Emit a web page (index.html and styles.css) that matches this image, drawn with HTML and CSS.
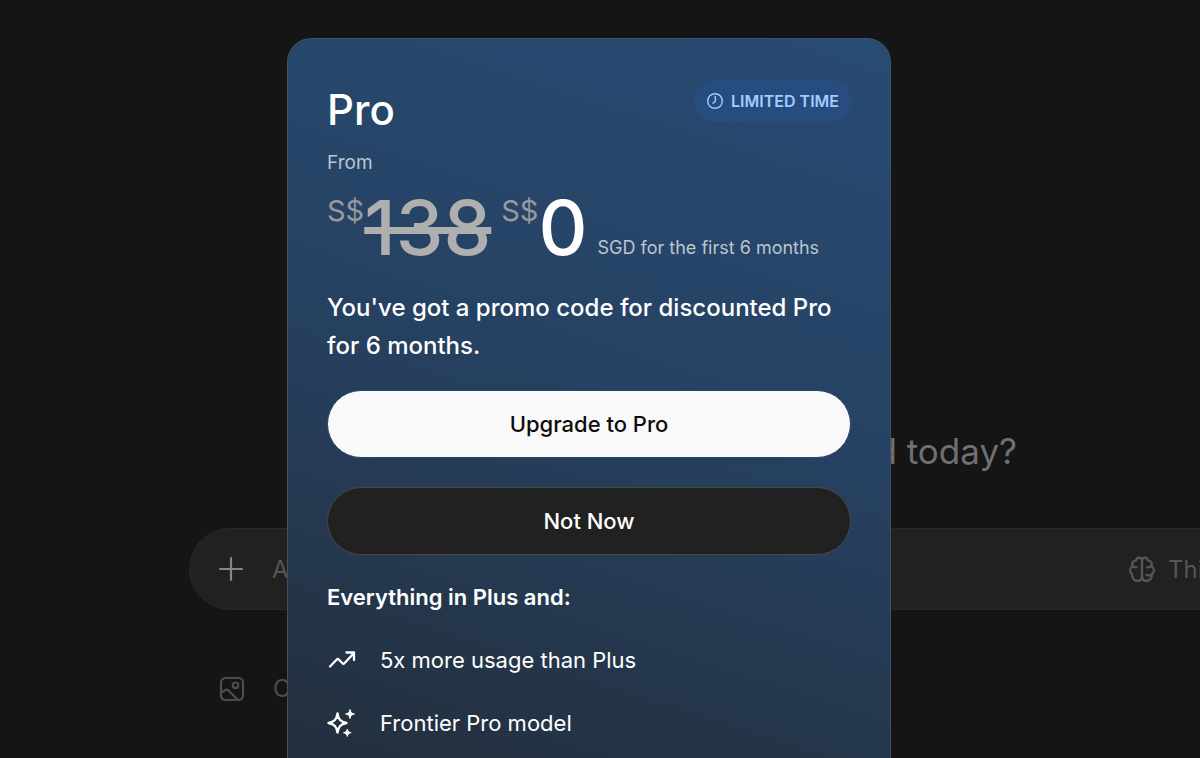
FILE: index.html
```html
<!DOCTYPE html>
<html lang="en">
<head>
<meta charset="utf-8">
<meta name="viewport" content="width=device-width, initial-scale=1">
<title>Upgrade to Pro</title>
<link rel="stylesheet" href="styles.css">
</head>
<body>
<main class="chat">
  <h1 class="greeting">What's on your mind today?</h1>
  <form class="composer">
    <button class="icon-button" type="button" aria-label="Add">
      <svg width="26" height="26" viewBox="0 0 26 26" fill="none" stroke="currentColor" stroke-width="2.200" stroke-linecap="round"><path d="M13 2v22M2 13h22"/></svg>
    </button>
    <input class="prompt" type="text" aria-label="Message" placeholder="Ask anything">
    <button class="thinking" type="button">
      <svg width="28" height="28" viewBox="0 0 28 28" fill="none" stroke="currentColor" stroke-width="2.400" stroke-linecap="round" stroke-linejoin="round"><path d="M14 4.800C13 1.800 8.400 2 8.200 5.400 4.800 5.600 3.400 8.600 4.600 11 1.300 13 1.400 17.500 4.200 19.200 4 23 6 26 9.500 26c3 0 4.500-2 4.500-5V4.800C15 1.800 19.600 2 19.800 5.400 23.200 5.600 24.600 8.600 23.400 11c3.300 2 3.200 6.500.4 8.200C24 23 22 26 18.500 26c-3 0-4.500-2-4.500-5"/><path d="M4.600 11c.8 1.200 2 1.500 3.800 1.200M19.300 12.200c1.800 0 3.300-.2 4.100-1.200M18.500 19.800c1.600.9 3.500.6 5.300-.6"/></svg>
      <span>Thinking</span>
    </button>
  </form>
  <a class="suggestion" href="#">
    <svg width="26" height="26" viewBox="0 0 26 26" fill="none" stroke="currentColor" stroke-width="2.200" stroke-linecap="round" stroke-linejoin="round"><rect x="2" y="2" width="22" height="22" rx="4.500"/><circle cx="16.500" cy="9.300" r="2.800"/><path d="M2.500 16.500 6.300 14c1.100-.7 2.100-.5 3 .4L18.500 23.500"/></svg>
    <span>Create an image</span>
  </a>
</main>

<div class="overlay">
  <section class="card" role="dialog" aria-labelledby="plan-name">
    <header class="card-header">
      <h2 class="plan-name" id="plan-name">Pro</h2>
      <span class="badge">
        <svg width="18" height="18" viewBox="0 0 18 18" fill="none" stroke="currentColor" stroke-width="1.400" stroke-linecap="round" stroke-linejoin="round"><circle cx="9" cy="9" r="7.300"/><path d="M9.300 4.500v4.700L7 11.300"/></svg>
        LIMITED TIME
      </span>
    </header>
    <p class="from">From</p>
    <div class="pricing">
      <span class="currency">S$</span><s class="old-price">138</s>
      <span class="currency currency-new">S$</span><span class="new-price">0</span>
      <span class="term">SGD for the first 6 months</span>
    </div>
    <p class="promo">You've got a promo code for discounted Pro for 6 months.</p>
    <button class="button button-primary" type="button">Upgrade to Pro</button>
    <button class="button button-secondary" type="button">Not Now</button>
    <h3 class="features-title">Everything in Plus and:</h3>
    <ul class="features">
      <li class="feature">
        <svg width="30" height="30" viewBox="0 0 30 30" fill="none" stroke="currentColor" stroke-width="2.300" stroke-linecap="round" stroke-linejoin="round"><path d="M3 21.500 10 14.300a1 1 0 0 1 1.500 0l4.200 4.200a1 1 0 0 0 1.500 0L26.500 8.500M19.500 7.500h7.500v7.500"/></svg>
        <span>5x more usage than Plus</span>
      </li>
      <li class="feature">
        <svg width="30" height="30" viewBox="0 0 30 30" fill="none" stroke="currentColor" stroke-width="2.300" stroke-linejoin="round"><path d="M10.500 5.500c.9 6 3 8.300 9 9.500-6 1.200-8.100 3.500-9 9.500-.9-6-3-8.300-9-9.500 6-1.200 8.100-3.500 9-9.500Z"/><path fill="currentColor" stroke-width="1" d="M23 1.600c.6 2.800 1.500 3.700 4.400 4.400-2.900.7-3.800 1.600-4.400 4.400-.6-2.800-1.500-3.700-4.400-4.400 2.900-.7 3.800-1.600 4.400-4.400ZM20.300 21c.5 2.400 1.300 3.200 3.800 3.700-2.500.6-3.300 1.400-3.800 3.700-.5-2.300-1.300-3.100-3.800-3.700 2.500-.5 3.300-1.300 3.800-3.700Z"/></svg>
        <span>Frontier Pro model</span>
      </li>
    </ul>
  </section>
</div>
</body>
</html>
```
FILE: styles.css
```css
* {
  box-sizing: border-box;
}

body {
  margin: 0;
  height: 100vh;
  position: relative;
  overflow: hidden;
  background: #151515;
  color: #fff;
  font-family: Inter, "Liberation Sans", sans-serif;
}

h1, h2, h3, p, ul {
  margin: 0;
  padding: 0;
  font-weight: 400;
}

button, input {
  font: inherit;
  border: 0;
  background: none;
  color: inherit;
  padding: 0;
}

svg {
  flex: none;
  display: block;
}

.chat {
  height: 100%;
  margin-right: -190px;
  padding: 426px 0 0 189px;
}

.greeting {
  padding-right: 373px;
  text-align: right;
  font-size: 35px;
  line-height: 50px;
  color: #707070;
}

.composer {
  display: flex;
  align-items: center;
  gap: 28px;
  height: 82px;
  margin-top: 52px;
  padding: 0 28px;
  border: 1px solid #292929;
  border-radius: 41px;
  background: #212121;
}

.icon-button {
  color: #858585;
}

.prompt {
  flex: 1;
  min-width: 0;
  font-size: 24px;
}

.prompt::placeholder {
  color: #555;
  opacity: 1;
}

.thinking {
  display: flex;
  align-items: center;
  gap: 12px;
  width: 233px;
  font-size: 24px;
  color: #555;
}

.suggestion {
  display: flex;
  align-items: center;
  gap: 28px;
  padding: 64px 0 0 30px;
  font-size: 24px;
  line-height: 30px;
  color: #4d4d4d;
  text-decoration: none;
}

.overlay {
  position: absolute;
  inset: 0;
  display: flex;
  justify-content: center;
  align-items: flex-start;
  padding: 38px 22px 0 0;
}

.card {
  width: 100%;
  max-width: 604px;
  min-height: 900px;
  padding: 39px;
  border: 1px solid #3f5166;
  border-radius: 24px;
  background: linear-gradient(198deg, #284b74 0%, #264263 38%, #25384f 62%, #23303f 80%, #222831 100%);
}

.card-header {
  display: flex;
  justify-content: space-between;
  align-items: flex-start;
}

.plan-name {
  padding-top: 5px;
  font-size: 42px;
  font-weight: 500;
  line-height: 54px;
}

.badge {
  display: flex;
  align-items: center;
  gap: 7px;
  height: 42px;
  margin-top: 2px;
  padding: 0 12px;
  border-radius: 21px;
  background: #274d80;
  color: #a3ccff;
  font-size: 16px;
  font-weight: 600;
}

.from {
  margin-top: 14px;
  font-size: 19px;
  line-height: 24px;
  color: #bcc5d0;
}

.pricing {
  display: flex;
  align-items: flex-start;
  height: 90px;
  margin-top: 8px;
  white-space: nowrap;
}

.currency {
  padding-top: 10px;
  font-size: 29px;
  line-height: 36px;
  color: #999;
}

.currency-new {
  margin-left: 10px;
}

.old-price, .new-price {
  font-size: 76px;
  font-weight: 500;
  line-height: 88px;
}

.old-price {
  color: #afafaf;
  text-decoration-thickness: 7px;
}

.term {
  margin-left: 10px;
  padding-top: 53px;
  font-size: 18px;
  line-height: 24px;
  color: #bcc5d0;
}

.promo {
  margin-top: 16px;
  font-size: 24px;
  font-weight: 500;
  line-height: 38px;
}

.button {
  display: block;
  width: 100%;
  height: 68px;
  border-radius: 34px;
  font-size: 22px;
}

.button-primary {
  margin-top: 25px;
  border: 1px solid #284666;
  background: #f9f9f9;
  color: #0d0d0d;
  font-weight: 500;
}

.button-secondary {
  margin-top: 29px;
  border: 1px solid #4a4845;
  background: #212121;
  font-weight: 500;
}

.features-title {
  margin-top: 26px;
  font-size: 22px;
  font-weight: 600;
  line-height: 32px;
}

.features {
  display: grid;
  gap: 31px;
  margin-top: 31px;
  list-style: none;
}

.feature {
  display: flex;
  align-items: center;
  gap: 23px;
  font-size: 22px;
  line-height: 32px;
}
```
